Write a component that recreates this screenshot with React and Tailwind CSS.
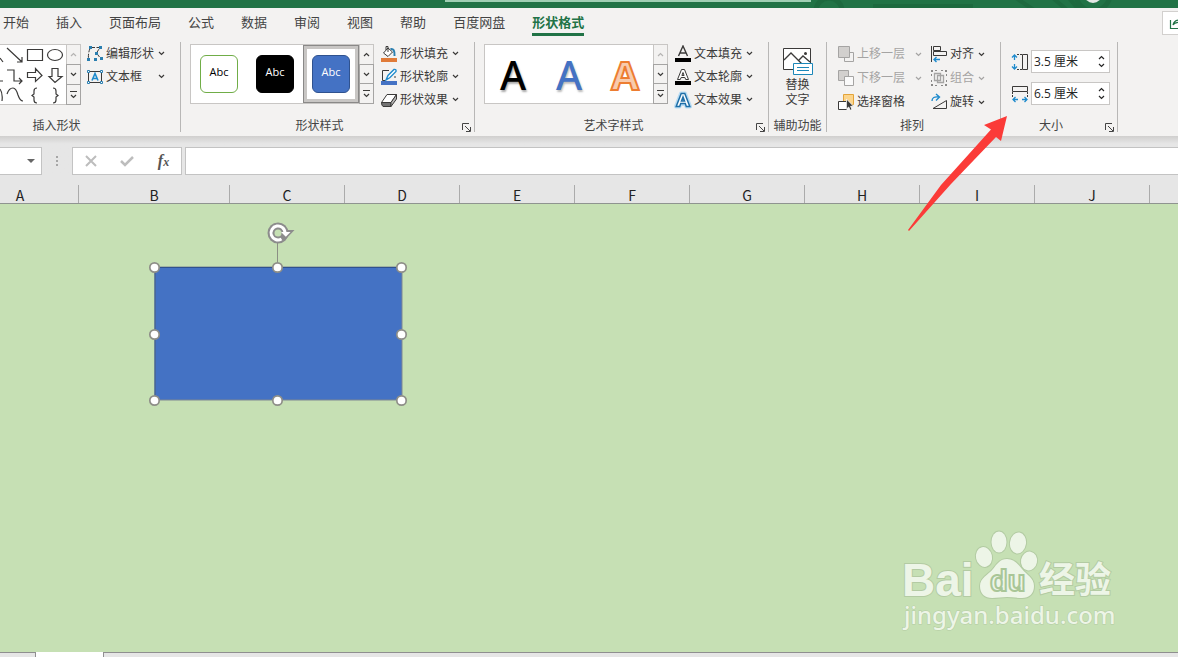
import React, { useState } from "react";

const tabs = ["开始", "插入", "页面布局", "公式", "数据", "审阅", "视图", "帮助", "百度网盘", "形状格式"];

const columns = ["B", "C", "D", "E", "F", "G", "H", "I", "J"];

const Chevron = ({ up = false }) => (
  <svg width="7" height="5" viewBox="0 0 7 5" fill="none" stroke="currentColor" strokeWidth="1.2">
    <path d={up ? "M1 4 3.5 1.5 6 4" : "M1 1 3.5 3.5 6 1"} />
  </svg>
);

const Icon = ({ children }) => (
  <svg width="18" height="18" viewBox="0 0 18 18" fill="none" stroke="#3b3a39" className="shrink-0">
    {children}
  </svg>
);

const EditShapeIcon = () => (
  <Icon>
    <path d="M4 3.500Q2 8 2.500 14M5 2.500h9L10.500 8 15 14" strokeDasharray="4 1.500" />
    <path fill="#2b7fb0" stroke="none" d="M3 1h3v3H3zM13 1h3v3h-3zM9 7h3v3H9zM1 13h3v3H1zM8 13h3v3H8zM14 12h3v3h-3z" />
  </Icon>
);

const TextBoxIcon = () => (
  <Icon>
    <path d="M2.500 3.500h13v11h-13z" />
    <path fill="#fff" stroke="#2b7fb0" d="M1.500 2.500h2v2h-2zM14.500 2.500h2v2h-2zM1.500 13.500h2v2h-2zM14.500 13.500h2v2h-2z" />
    <path stroke="#1e8bcd" strokeWidth="1.600" d="M6 12.500 9 5.500l3 7M7 10.500h4" />
  </Icon>
);

const ShapeFillIcon = () => (
  <Icon>
    <path fill="#fff" d="M8 3 3.500 8 8 11.500 12.500 7z" />
    <path d="M8 7V1.500H6V5" />
    <path stroke="#2b7fb0" strokeWidth="2" d="M10.500 4q4.500-1 4 7" />
    <path fill="#e07b39" stroke="none" d="M1 13h16v4H1z" />
  </Icon>
);

const ShapeOutlineIcon = () => (
  <Icon>
    <path d="M9 2.500H2.500v10h3M15 8v2" />
    <path fill="#fff" stroke="#1e8bcd" strokeWidth="1.400" d="M6 12 8 7.500 14 1.500q2.500-.5 2 2L10 9.500z" />
    <path fill="#4472c4" stroke="none" d="M1 13h16v4H1z" />
  </Icon>
);

const ShapeEffectIcon = () => (
  <Icon>
    <path fill="#fff" d="M7 3.500h9.500L11 11.500H1.500z" />
    <path fill="#737373" d="M1.500 11.500H11v4H3q-1.500-1-1.500-4z" />
    <path fill="#b5b5b5" d="M16.500 3.500V8L11 15.500v-4z" />
  </Icon>
);

const TextFillIcon = () => (
  <Icon>
    <path strokeWidth="1.400" d="M4.500 11 9 1l4.500 10M6 8h6" />
    <path fill="#000" stroke="none" d="M1 13h16v4H1z" />
  </Icon>
);

const TextOutlineIcon = () => (
  <Icon>
    <path fill="#fff" d="M7.500 1.500h3l4 10h-2.800l-.8-2H7.100l-.8 2H3.500zM9 4.500 7.900 7.500h2.200z" />
    <path fill="#000" stroke="none" d="M1 13h16v4H1z" />
  </Icon>
);

const TextEffectIcon = () => (
  <Icon>
    <path stroke="#b9dcf3" strokeWidth="4" strokeLinejoin="round" d="M7 2.500h4l5 13h-3.500l-1-2.500H6.500l-1 2.500H2z" />
    <path fill="#fff" stroke="#1f6fa8" strokeWidth="1.500" d="M7.200 2.500h3.600l5 13h-3.500l-1-3H6.700l-1 3H2.200zM9 6 7.500 10h3z" />
  </Icon>
);

const BringForwardIcon = () => (
  <Icon>
    <path stroke="#a5a4a3" d="M12.500 7.500h4v9h-9v-4" />
    <path fill="#d2d0ce" stroke="#a5a4a3" d="M1.500 1.500h11v11h-11z" />
  </Icon>
);

const SendBackwardIcon = () => (
  <Icon>
    <path fill="#d2d0ce" stroke="#a5a4a3" d="M1.500 1.500h10v10h-10z" />
    <path fill="#fafafa" stroke="#a5a4a3" d="M7.500 7.500h9v9h-9z" />
  </Icon>
);

const SelectionPaneIcon = () => (
  <Icon>
    <path fill="#fcd58c" stroke="#e3a43a" d="M6.500 1.500h10v10h-10z" />
    <path fill="#fff" d="M1.500 8.500h8v8h-8z" />
    <path fill="#3b3a39" stroke="#fff" strokeWidth=".8" d="M9.500 6v10l2.200-2 1.500 3.300 1.800-.8-1.400-3.200h3z" />
  </Icon>
);

const AlignIcon = () => (
  <Icon>
    <path d="M1.500 1v16M3.500 1.500h7v4h-7zM3.500 6.500h13v4h-13z" />
    <path stroke="#1e8bcd" strokeWidth="1.400" d="M10 14.500H4M6.500 12 4 14.500 6.500 17" />
  </Icon>
);

const GroupIcon = () => (
  <Icon>
    <path stroke="#a5a4a3" strokeWidth="1.300" d="M4.500 4.500h6v7h-6zM7.500 6.500h6v7h-6z" />
    <path fill="#8a8988" stroke="none" d="M1 1h2v2H1zM15 1h2v2h-2zM1 15h2v2H1zM15 15h2v2h-2zM5 1h2v1H5zM11 1h2v1h-2zM5 16h2v1H5zM11 16h2v1h-2zM1 5h1v2H1zM1 11h1v2H1zM16 5h1v2h-1zM16 11h1v2h-1z" />
  </Icon>
);

const RotateIcon = () => (
  <Icon>
    <path d="M3 15.500h13.500v-8z" />
    <path stroke="#1e8bcd" strokeWidth="1.400" d="M2 8q0-5 7-4M6 1l3.500 3L6 7.500" />
  </Icon>
);

const HeightIcon = () => (
  <Icon>
    <path d="M11.500 1.500h5v15h-5z" />
    <path strokeDasharray="2 1" d="M6 1.500h5M6 16.500h5" />
    <path stroke="#1e8bcd" strokeWidth="1.300" d="M3.500 7V2M1 4.500 3.500 2 6 4.500M3.500 11v5M1 13.500 3.500 16 6 13.500" />
  </Icon>
);

const WidthIcon = () => (
  <Icon>
    <path d="M1.500 1.500h15v5h-15z" />
    <path strokeDasharray="2 1" d="M1.500 7v5M16.500 7v5" />
    <path stroke="#1e8bcd" strokeWidth="1.300" d="M7 14.500H2M4.500 12 2 14.500 4.500 17M11 14.500h5M13.500 12l2.500 2.500-2.500 2.500" />
  </Icon>
);

const AltTextIcon = () => (
  <svg width="32" height="30" viewBox="0 0 32 30" fill="none" stroke="#3b3a39">
    <path fill="#fff" d="M1.500 1.500h27v21h-27z" />
    <path strokeWidth="1.300" d="M2 13 9 6l12 12M17 13l4-4 7 6" />
    <circle cx="23.500" cy="6.500" r="1.500" fill="#3b3a39" stroke="none" />
    <path fill="#fff" stroke="#1b87b8" d="M11.500 16.500h19v11h-19z" />
    <path stroke="#1b87b8" d="M15 20.500h12M15 23.500h12" />
  </svg>
);

const ShapeGallery = () => (
  <svg width="66" height="60" viewBox="0 0 66 60" fill="none" stroke="#3b3a39" strokeWidth="1.200">
    <path d="M0 13 3 17M7 3 22 17M22 12v5h-5M27.500 4.500h15v11h-15z" />
    <ellipse cx="55" cy="10" rx="7.500" ry="5.500" />
    <path d="M0 36h3M7 25h7v11h8M19 33l3 3-3 3" />
    <path d="M27.500 27.500h8v-4l6.500 7-6.500 6v-4h-8zM52 23.500h6v8h4l-7 6-6-6h3z" />
    <path d="M0 44q3 4 2 12M7 49q2-6 6-6 3 0 5 7 2 6 5 6M37 43q-3 0-3 3v3l-2 1.500 2 1.500v3q0 3 3 3M53 43q3 0 3 3v3l2 1.500-2 1.500v3q0 3-3 3" />
  </svg>
);

const GalleryScroll = ({ topDisabled = false }) => (
  <div className="flex w-[15px] flex-col text-[#3b3a39]">
    <button
      aria-label="向上"
      disabled={topDisabled}
      className="flex flex-1 items-center justify-center border border-[#c8c6c4] disabled:text-[#b5b4b3]"
    >
      <Chevron up />
    </button>
    <button aria-label="向下" className="-mt-px flex flex-1 items-center justify-center border border-[#a5a4a3]">
      <Chevron />
    </button>
    <button
      aria-label="其他"
      className="-mt-px flex flex-1 flex-col items-center justify-center gap-0.5 border border-[#a5a4a3]"
    >
      <span className="h-px w-[7px] bg-[#3b3a39]" />
      <Chevron />
    </button>
  </div>
);

const RibbonButton = ({ icon, label, arrow = true, disabled = false, tall = false }) => (
  <button
    disabled={disabled}
    className={`flex items-center gap-0.5 text-xs whitespace-nowrap text-[#3b3a39] disabled:text-[#a5a4a3] ${
      tall ? "h-6" : "h-[23px]"
    }`}
  >
    {icon}
    <span>{label}</span>
    {arrow && (
      <span className="ml-auto pl-0.5">
        <Chevron />
      </span>
    )}
  </button>
);

const RibbonGroup = ({ label, launcher = false, labelClass = "", className = "", bodyClass = "", children }) => (
  <section className={`flex h-[90px] shrink-0 flex-col border-r border-[#b8b7b6] ${className}`}>
    <div className={`flex flex-1 items-start ${bodyClass}`}>{children}</div>
    <div className="flex h-[13px] items-end pr-[3px]">
      <span className={`flex-1 text-center text-xs leading-[13px] whitespace-nowrap text-[#444] ${labelClass}`}>
        {label}
      </span>
      {launcher && (
        <button aria-label={`${label}设置`}>
          <svg width="9" height="9" viewBox="0 0 9 9" fill="none" stroke="#444">
            <path d="M.5 7V.5H7M3 3l5 5M8.500 4v4.500H4" />
          </svg>
        </button>
      )}
    </div>
  </section>
);

const SizeField = ({ id, label, icon, value, onChange }) => (
  <div className="flex items-center gap-0.5">
    <label htmlFor={id} aria-label={label}>
      {icon}
    </label>
    <div className="flex h-[23px] w-[79px] border border-[#c8c6c4] bg-white">
      <input
        id={id}
        type="text"
        value={value}
        onChange={(e) => onChange(e.target.value)}
        className="w-0 flex-1 pl-0.5 text-xs text-[#262626] outline-none"
      />
      <div className="flex w-4 flex-col items-center justify-evenly text-[#262626]">
        <button aria-label={`${label}增加`}>
          <Chevron up />
        </button>
        <button aria-label={`${label}减少`}>
          <Chevron />
        </button>
      </div>
    </div>
  </div>
);

const SelectedShape = () => {
  const handles = [
    [7, 48], [130, 48], [254, 48],
    [7, 115], [254, 115],
    [7, 181], [130, 181], [254, 181],
  ];
  return (
    <svg width="262" height="190" viewBox="0 0 262 190" className="absolute top-[15px] left-[147px]">
      <path d="M130.500 24v24" stroke="#8b8f84" />
      <rect x="8" y="48" width="247" height="133" fill="#4472c4" stroke="#7f8791" />
      <path d="M8 181V48.500h246" fill="none" stroke="#2f528f" />
      {handles.map(([x, y]) => (
        <circle key={`${x}-${y}`} cx={x + 0.5} cy={y + 0.5} r="4.700" fill="#fff" stroke="#8e8e88" strokeWidth="1.700" />
      ))}
      <circle cx="131" cy="14" r="10.500" fill="#8c8c8c" />
      <path d="M131 11h16.500l-9 9.500z" fill="#8c8c8c" />
      <circle cx="131" cy="14" r="3.500" fill="#c6e0b4" />
      <path d="M138 14a7 7 0 1 0-3.500 6" fill="none" stroke="#fff" strokeWidth="3" />
      <path d="M134 13h9.500l-4.700 4.700z" fill="#fff" />
    </svg>
  );
};

const Watermark = () => (
  <svg width="216" height="106" viewBox="0 0 216 106" className="absolute right-[60px] bottom-[20px]">
    <g fill="#edf5e7" stroke="#b3cba3" strokeWidth="2" paintOrder="stroke">
      <ellipse cx="82" cy="31" rx="8" ry="10" transform="rotate(-12 82 31)" />
      <ellipse cx="97" cy="16" rx="7.500" ry="10.500" />
      <ellipse cx="116" cy="17" rx="8" ry="10.500" transform="rotate(8 116 17)" />
      <ellipse cx="127" cy="35" rx="8" ry="9.500" transform="rotate(10 127 35)" />
      <path d="M105 33c-7 0-10 5-14 10-5 6-13 9-13 17 0 8 5 12 12 12 5 0 10-1 15-1s10 1 15 1c7 0 12-4 12-12 0-8-7-11-12-17-4-5-8-10-15-10z" />
      <text x="0" y="70" className="font-['Liberation_Sans',sans-serif] text-[46px] font-bold">Bai</text>
      <text x="137" y="67" className="font-['Noto_Sans_CJK_SC',sans-serif] text-[36px] font-bold">经验</text>
      <text x="2" y="98" strokeWidth="1" className="font-['Noto_Sans',sans-serif] text-[24px] font-medium">jingyan.baidu.com</text>
    </g>
    <text
      x="88"
      y="65"
      fill="#edf5e7"
      stroke="#a9c697"
      strokeWidth="2"
      className="font-['Liberation_Sans',sans-serif] text-[29px] font-bold"
    >
      du
    </text>
  </svg>
);

const TitleBar = () => (
  <div className="flex h-2 shrink-0 justify-between overflow-hidden bg-[#217346]">
    <div className="ml-[445px] h-0.5 w-[366px] bg-[#a0cfb4]" />
    <svg width="367" height="8" viewBox="0 0 367 8" fill="none" stroke="#1d6a3f" strokeWidth="5">
      <circle cx="18" cy="11" r="13" />
      <path d="M62 6h100M205-2l18 12M242-2l14 12M258-2l10 12" strokeWidth="4" />
      <circle cx="282" cy="-6" r="17" />
      <circle cx="282" cy="-6" r="9" fill="#e4e8e5" stroke="none" />
    </svg>
  </div>
);

const App = () => {
  const [activeTab, setActiveTab] = useState("形状格式");
  const [height, setHeight] = useState("3.5 厘米");
  const [width, setWidth] = useState("6.5 厘米");

  return (
    <div className="relative flex h-screen flex-col overflow-hidden bg-[#e6e6e6] font-['Open_Sans','Noto_Sans_CJK_SC',sans-serif]">
      <TitleBar />

      {/* Ribbon */}
      <header className="shrink-0 overflow-hidden bg-[#f3f2f1] pb-1">
        <div className="flex h-[34px] items-start">
          <nav className="flex gap-[27px] pl-[3px]">
            {tabs.map((tab) => (
              <button
                key={tab}
                onClick={() => setActiveTab(tab)}
                className={`h-7 border-b-[3px] pt-[3px] text-[13px] leading-[22px] whitespace-nowrap ${
                  tab === activeTab
                    ? "border-[#217346] font-bold text-[#217346]"
                    : "border-transparent text-[#444]"
                }`}
              >
                {tab}
              </button>
            ))}
          </nav>
          <button
            aria-label="共享"
            className="mt-[3px] -mr-5 ml-auto flex h-6 w-9 shrink-0 items-center border border-[#d2d0ce] bg-white pl-1.5"
          >
            <svg width="16" height="14" viewBox="0 0 16 14" fill="none" stroke="#217346" strokeWidth="1.200">
              <path d="M1.500 4v8.500h12V10M4 9q1-5 7-5V1l4 4-4 4V6.500Q6 6 4 9z" />
            </svg>
          </button>
        </div>

        <div className="flex">
          <RibbonGroup label="插入形状" labelClass="pr-[64px]" className="w-[181px]">
            <div className="mt-0.5 flex h-[61px]">
              <div className="border-y border-[#c8c6c4] bg-white">
                <ShapeGallery />
              </div>
              <GalleryScroll topDisabled />
            </div>
            <div className="ml-[5px] flex w-[79px] flex-col">
              <RibbonButton icon={<EditShapeIcon />} label="编辑形状" />
              <RibbonButton icon={<TextBoxIcon />} label="文本框" />
            </div>
          </RibbonGroup>

          <RibbonGroup label="形状样式" launcher labelClass="pr-1" className="w-[294px]" bodyClass="pl-[9px]">
            <div className="mt-0.5 flex h-[60px]">
              <div className="flex border border-r-0 border-[#c8c6c4] bg-white">
                <button className="flex h-[58px] w-14 items-center justify-center">
                  <span className="h-[38px] w-[38px] rounded-md border border-[#70ad47] bg-white text-[11px] leading-8 text-black">Abc</span>
                </button>
                <button className="flex h-[58px] w-14 items-center justify-center">
                  <span className="h-[38px] w-[38px] rounded-md border border-black bg-black text-[11px] leading-8 text-white">Abc</span>
                </button>
                <button className="flex h-[58px] w-14 items-center justify-center border border-[#8a8988] bg-white ring-3 ring-[#c8c6c4] ring-inset">
                  <span className="h-[38px] w-[38px] rounded-md border border-[#2f528f] bg-[#4472c4] text-[11px] leading-8 text-white">Abc</span>
                </button>
              </div>
              <GalleryScroll />
            </div>
            <div className="ml-1.5 flex w-[79px] flex-col">
              <RibbonButton icon={<ShapeFillIcon />} label="形状填充" />
              <RibbonButton icon={<ShapeOutlineIcon />} label="形状轮廓" />
              <RibbonButton icon={<ShapeEffectIcon />} label="形状效果" />
            </div>
          </RibbonGroup>

          <RibbonGroup label="艺术字样式" launcher labelClass="pr-1" className="w-[294px]" bodyClass="pl-[9px]">
            <div className="mt-0.5 flex h-[60px]">
              <div className="flex border border-r-0 border-[#c8c6c4] bg-white font-['Noto_Sans',sans-serif] text-[40px] leading-[60px] font-medium">
                <button className="w-14 text-black [text-shadow:1px_2px_2px_#aaa]">A</button>
                <button className="w-14 text-[#4472c4] [text-shadow:1px_2px_2px_#bbb]">A</button>
                <button className="w-14 font-bold text-[#f8cbad] [-webkit-text-stroke:2px_#ed7d31]">A</button>
              </div>
              <GalleryScroll topDisabled />
            </div>
            <div className="ml-1.5 flex w-[79px] flex-col">
              <RibbonButton icon={<TextFillIcon />} label="文本填充" />
              <RibbonButton icon={<TextOutlineIcon />} label="文本轮廓" />
              <RibbonButton icon={<TextEffectIcon />} label="文本效果" />
            </div>
          </RibbonGroup>

          <RibbonGroup label="辅助功能" labelClass="pl-[3px]" className="w-[58px]">
            <button className="flex w-full flex-col items-center pt-[5px] text-xs leading-[15px] text-[#3b3a39]">
              <AltTextIcon />
              <span>替换</span>
              <span>文字</span>
            </button>
          </RibbonGroup>

          <RibbonGroup label="排列" className="w-[174px]" bodyClass="pl-[10px]">
            <div className="flex w-[85px] flex-col">
              <RibbonButton tall disabled icon={<BringForwardIcon />} label="上移一层" />
              <RibbonButton tall disabled icon={<SendBackwardIcon />} label="下移一层" />
              <RibbonButton tall icon={<SelectionPaneIcon />} label="选择窗格" arrow={false} />
            </div>
            <div className="ml-2 flex w-[55px] flex-col">
              <RibbonButton tall icon={<AlignIcon />} label="对齐" />
              <RibbonButton tall disabled icon={<GroupIcon />} label="组合" />
              <RibbonButton tall icon={<RotateIcon />} label="旋转" />
            </div>
          </RibbonGroup>

          <RibbonGroup label="大小" launcher labelClass="pr-1" className="w-[117px]">
            <div className="ml-[10px] flex flex-col gap-[9px] pt-2">
              <SizeField id="shape-height" label="高度" icon={<HeightIcon />} value={height} onChange={setHeight} />
              <SizeField id="shape-width" label="宽度" icon={<WidthIcon />} value={width} onChange={setWidth} />
            </div>
          </RibbonGroup>
        </div>
      </header>

      {/* Formula bar */}
      <div className="flex shrink-0 bg-linear-to-b from-[#d0cfce] to-[#e6e6e6] to-20% pt-[11px]">
        <div className="flex h-7 w-[42px] border border-l-0 border-[#c3c3c3] bg-white">
          <input aria-label="名称框" className="w-0 flex-1 text-xs outline-none" />
          <button aria-label="展开名称框" className="w-5">
            <svg width="8" height="4" viewBox="0 0 8 4" className="mx-auto" fill="#666">
              <path d="M0 0h8L4 4z" />
            </svg>
          </button>
        </div>
        <div className="flex w-[30px] flex-col items-center justify-center gap-0.5">
          <span className="h-0.5 w-0.5 bg-[#a6a6a6]" />
          <span className="h-0.5 w-0.5 bg-[#a6a6a6]" />
          <span className="h-0.5 w-0.5 bg-[#a6a6a6]" />
        </div>
        <div className="flex h-7 w-[110px] items-center justify-around border border-[#c3c3c3] bg-white">
          <button aria-label="取消">
            <svg width="12" height="12" viewBox="0 0 12 12" stroke="#bdbdbd" strokeWidth="2">
              <path d="M1 1l10 10M11 1 1 11" />
            </svg>
          </button>
          <button aria-label="输入">
            <svg width="14" height="12" viewBox="0 0 14 12" fill="none" stroke="#bdbdbd" strokeWidth="2.500">
              <path d="M1 6l4 4 8-8" />
            </svg>
          </button>
          <button
            aria-label="插入函数"
            className="font-['Liberation_Serif',serif] text-base leading-5 font-bold text-[#555] italic"
          >
            f<span className="text-xs">x</span>
          </button>
        </div>
        <input
          aria-label="编辑栏"
          className="ml-[3px] h-7 w-0 flex-1 border border-r-0 border-[#c3c3c3] bg-white px-2 text-xs outline-none"
        />
      </div>

      {/* Column headers */}
      <div className="flex h-[29px] shrink-0 items-end overflow-hidden border-b border-[#8f9490] font-['Noto_Sans_CJK_SC',sans-serif] text-[14px] leading-5 text-[#222]">
        <div className="-ml-[38px] h-[18px] w-[117px] shrink-0 border-r border-[#ababab] text-center">A</div>
        {columns.map((col) => (
          <div
            key={col}
            className={`h-[18px] shrink-0 border-r border-[#ababab] text-center ${col === "B" ? "w-[151px]" : "w-[115px]"}`}
          >
            {col}
          </div>
        ))}
      </div>

      {/* Sheet */}
      <main className="relative min-h-0 flex-1 bg-[#c6e0b4]">
        <SelectedShape />
        <Watermark />
      </main>

      {/* Sheet tabs */}
      <footer className="flex h-[5px] shrink-0">
        <div className="w-9 border-t border-r border-[#8f8f8f]" />
        <button aria-label="工作表" className="w-[67px] bg-white" />
        <div className="flex-1 border-t border-l border-[#8f8f8f]" />
      </footer>

      {/* Pointer to the size group */}
      <svg width="100" height="116" viewBox="0 0 100 116" className="pointer-events-none absolute top-[116px] left-[908px]">
        <path d="M99 0 76 9l7 4.500L33 69 0 114l1 1L43 68 88 21l5 4z" fill="#fb3b38" />
      </svg>
    </div>
  );
};

export default App;
